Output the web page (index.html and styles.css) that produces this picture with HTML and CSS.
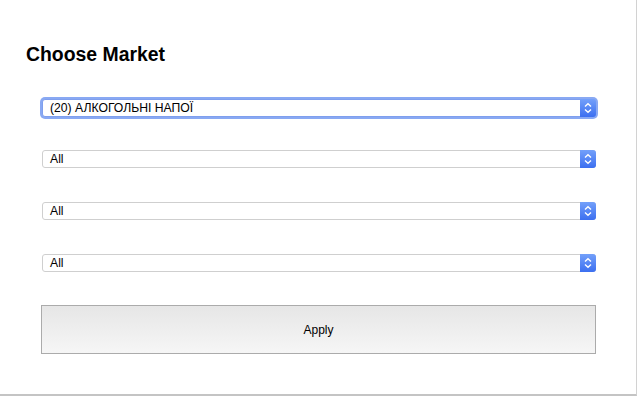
FILE: index.html
```html
<!DOCTYPE html>
<html>
<head>
<meta charset="utf-8">
<link rel="stylesheet" href="styles.css">
</head>
<body>
<div class="card">
  <h1 class="title">Choose Market</h1>
  <div class="form">
    <div class="select focus">
      <span class="value">(20) АЛКОГОЛЬНІ НАПОЇ</span>
      <span class="arrow"><svg width="16" height="18" viewBox="0 0 16 18"><path d="M5 7.5 L8 4.8 L11 7.5 M5 10.5 L8 13.2 L11 10.5" fill="none" stroke="#fff" stroke-width="1.4"/></svg></span>
    </div>
    <div class="select">
      <span class="value">All</span>
      <span class="arrow"><svg width="16" height="18" viewBox="0 0 16 18"><path d="M5 7.5 L8 4.8 L11 7.5 M5 10.5 L8 13.2 L11 10.5" fill="none" stroke="#fff" stroke-width="1.4"/></svg></span>
    </div>
    <div class="select">
      <span class="value">All</span>
      <span class="arrow"><svg width="16" height="18" viewBox="0 0 16 18"><path d="M5 7.5 L8 4.8 L11 7.5 M5 10.5 L8 13.2 L11 10.5" fill="none" stroke="#fff" stroke-width="1.4"/></svg></span>
    </div>
    <div class="select">
      <span class="value">All</span>
      <span class="arrow"><svg width="16" height="18" viewBox="0 0 16 18"><path d="M5 7.5 L8 4.8 L11 7.5 M5 10.5 L8 13.2 L11 10.5" fill="none" stroke="#fff" stroke-width="1.4"/></svg></span>
    </div>
    <div class="button">Apply</div>
  </div>
</div>
</body>
</html>
```
FILE: styles.css
```css
html, body {
  margin: 0;
  padding: 0;
  background: #fff;
}
body {
  font-family: "Liberation Sans", Arial, sans-serif;
  color: #000;
}
.card {
  box-sizing: border-box;
  width: 637px;
  height: 396px;
  border-right: 1px solid #d2d2d2;
  border-bottom: 2px solid #c4c4c4;
  padding-top: 41px;
}
.title {
  margin: 0 0 0 26px;
  font-size: 19.4px;
  line-height: 26px;
  font-weight: bold;
}
.form {
  margin: 32px 0 0 42px;
  width: 554px;
  display: flex;
  flex-direction: column;
}
.select {
  box-sizing: border-box;
  height: 18px;
  border: 1px solid #cfcfcf;
  border-radius: 3px;
  display: flex;
  align-items: center;
  font-size: 12.2px;
  padding-left: 7px;
  margin-bottom: 34px;
  background: #fff;
}
.select.focus {
  margin-bottom: 33px;
  box-shadow: 0 0 0 2px #89a9f3;
  border-color: #7f9fee;
}
.value {
  flex: 1;
  line-height: 16px;
}
.arrow {
  width: 16px;
  height: 18px;
  margin-right: -1px;
  margin-top: -1px;
  margin-bottom: -1px;
  border-radius: 0 3px 3px 0;
  background: linear-gradient(#73a0fa, #3c6ff0);
  display: flex;
}
.button {
  box-sizing: border-box;
  margin-top: -1px;
  height: 49px;
  margin-left: -1px;
  width: 555px;
  border: 1px solid #ababab;
  background: linear-gradient(#e6e6e6, #f6f6f6);
  display: flex;
  align-items: center;
  justify-content: center;
  font-size: 12px;
}
```
